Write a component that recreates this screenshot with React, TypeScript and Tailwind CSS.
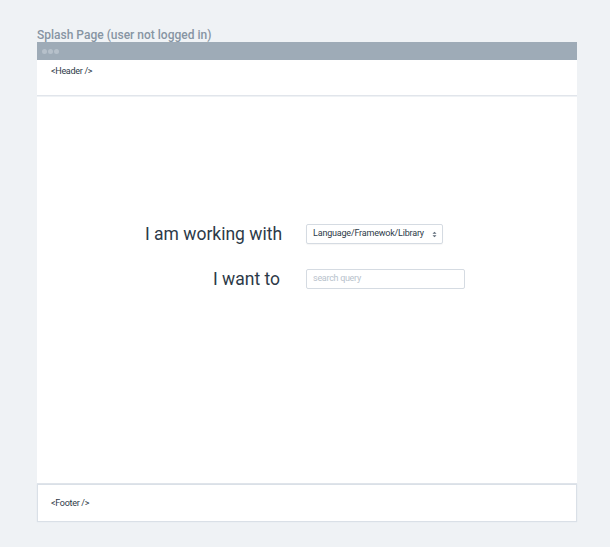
export default function App() {
  return (
    <div className="min-h-[547px] w-[610px] bg-[#eff2f5] pl-[37px] pt-[28px] font-['Roboto',sans-serif]">
      <h1 className="text-[12px] leading-[14px] font-medium text-[#8795a3]">Splash Page (user not logged in)</h1>

      <div className="w-[540px]">
        {/* window bar */}
        <div className="flex h-[18px] items-center gap-[1px] bg-[#9eabb7] px-[5px]">
          <span className="h-[5px] w-[5px] rounded-full bg-[#b6c0ca]" />
          <span className="h-[5px] w-[5px] rounded-full bg-[#b6c0ca]" />
          <span className="h-[5px] w-[5px] rounded-full bg-[#b6c0ca]" />
        </div>

        {/* header */}
        <div className="h-[36px] border-b border-[#e1e5eb] bg-white px-[14px] pt-[6px] text-[9px] leading-[11px] tracking-[-0.3px] text-[#2d3a48]">
          &lt;Header /&gt;
        </div>

        {/* main */}
        <div className="mt-[1px] h-[387px] border-b border-[#e1e5eb] bg-white pt-[127px]">
          <div className="grid grid-cols-[auto_auto] justify-center items-center gap-x-6 gap-y-[25px] pr-[4px]">
            <span className="text-right text-[17.5px] leading-5 text-[#2d3a48]">I am working with</span>
            <div className="justify-self-start flex h-5 w-[137px] items-center justify-between rounded-[2px] border border-[#d5dbe2] bg-white pl-[6px] pr-[5px] shadow-[0_1px_1px_rgba(0,0,0,0.04)]">
              <span className="text-[9px] tracking-[-0.2px] text-[#2d3a48]">Language/Framewok/Library</span>
              <svg width="5" height="7" viewBox="0 0 5 7" className="text-[#5b6876]">
                <path d="M0.5 2.8 L2.5 0.8 L4.5 2.8 Z" fill="currentColor" />
                <path d="M0.5 4.2 L2.5 6.2 L4.5 4.2 Z" fill="currentColor" />
              </svg>
            </div>
            <span className="text-right text-[17.5px] leading-5 text-[#2d3a48] pr-[2px]">I want to</span>
            <div className="flex h-5 w-[159px] items-center rounded-[2px] border border-[#d5dbe2] bg-white px-[6px]">
              <span className="text-[9px] tracking-[-0.3px] text-[#b8c2cc]">search query</span>
            </div>
          </div>
        </div>

        {/* footer */}
        <div className="mx-[1px] mt-[1px] flex h-[36px] items-center bg-white px-[13px] pt-[2px] text-[9px] tracking-[-0.3px] text-[#2d3a48] shadow-[0_0_1px_1px_rgba(210,217,225,0.7)]">
          &lt;Footer /&gt;
        </div>
      </div>
    </div>
  );
}
